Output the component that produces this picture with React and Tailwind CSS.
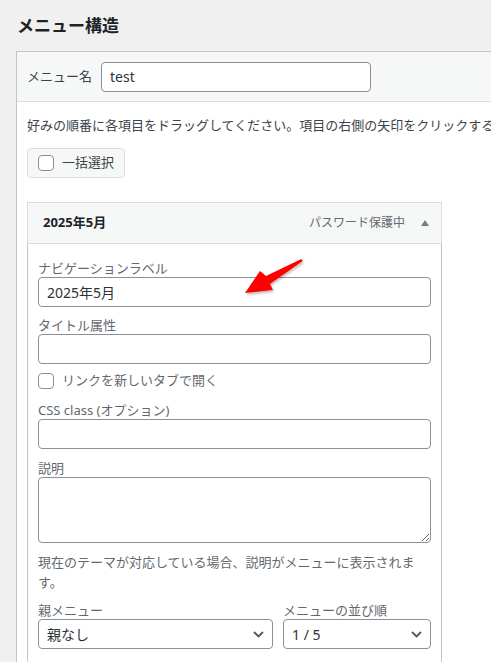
import React from "react";

// --- small form pieces ---
const TextInput = ({ value = "", className = "" }) => (
  <input
    readOnly
    defaultValue={value}
    className={`block h-[30px] rounded-[4px] border border-[#8c8f94] bg-white px-2 text-[14px] text-[#2c3338] outline-none ${className}`}
  />
);

const Check = () => (
  <span className="inline-block h-4 w-4 shrink-0 rounded-[4px] border border-[#8c8f94] bg-white" />
);

const FieldLabel = ({ children }) => (
  <div className="text-[13px] leading-[18px] text-[#646970]">{children}</div>
);

const FakeSelect = ({ value, className = "" }) => (
  <div
    className={`flex h-[30px] items-center justify-between rounded-[4px] border border-[#8c8f94] bg-white pl-2 pr-[8px] text-[14px] text-[#2c3338] ${className}`}
  >
    <span>{value}</span>
    <svg width="11" height="7" viewBox="0 0 11 7" fill="none">
      <path d="M1 1l4.5 4.5L10 1" stroke="#50575e" strokeWidth="1.8" />
    </svg>
  </div>
);

// --- red callout arrow drawn over the form ---
const RedArrow = () => (
  <svg
    className="pointer-events-none absolute left-[240px] top-[255px]"
    width="70"
    height="45"
    viewBox="0 0 70 45"
  >
    <defs>
      <filter id="arrowShadow" x="-20%" y="-20%" width="140%" height="140%">
        <feDropShadow dx="1" dy="2" stdDeviation="1.2" floodColor="#000" floodOpacity="0.25" />
      </filter>
    </defs>
    <polygon
      points="5,38 20,16 26,21 61.3,3.9 62.7,6.1 30,29 33,35"
      fill="#ff0000"
      filter="url(#arrowShadow)"
    />
  </svg>
);

export default function App() {
  return (
    <div className="relative h-[662px] w-full overflow-hidden bg-[#f0f0f1] pl-4 pt-[13px] font-['Noto_Sans','Noto_Sans_CJK_JP',sans-serif]">
      <h2 className="mb-[13px] pl-px text-[17px] font-bold leading-[25px] text-[#1d2327]">
        メニュー構造
      </h2>

      {/* Menu structure panel */}
      <div className="w-[640px] border border-[#c3c4c7] bg-white">
        <div className="flex h-[50px] items-center gap-[9px] border-b border-[#dcdcde] bg-[#f6f7f7] px-[10px]">
          <span className="text-[13px] text-[#3c434a]">メニュー名</span>
          <TextInput value="test" className="w-[270px]" />
        </div>

        <div className="px-[10px] pb-10 pt-[13px]">
          <p className="whitespace-nowrap text-[13px] leading-[20px] text-[#3c434a]">
            好みの順番に各項目をドラッグしてください。項目の右側の矢印をクリックすると、追加の設定オプションが表示されます。
          </p>

          <div className="mt-[13px] flex h-[30px] w-[98px] items-center gap-2 rounded-[4px] border border-[#dcdcde] bg-[#f6f7f7] px-[10px]">
            <Check />
            <span className="text-[13px] text-[#3c434a]">一括選択</span>
          </div>

          {/* Menu item */}
          <div className="mt-6 w-[415px]">
            <div className="flex h-[42px] items-center border border-[#dcdcde] bg-[#f6f7f7] pl-[15px] pr-[12px]">
              <span className="flex-1 text-[13px] font-bold text-[#1d2327]">2025年5月</span>
              <span className="text-[12px] text-[#646970]">パスワード保護中</span>
              <svg className="ml-[16px]" width="8" height="6" viewBox="0 0 8 6">
                <polygon points="0,6 4,0 8,6" fill="#787c82" />
              </svg>
            </div>

            <div className="border-x border-b border-[#c3c4c7] px-[10px] pb-10 pt-[15px]">
              <FieldLabel>ナビゲーションラベル</FieldLabel>
              <TextInput value="2025年5月" className="w-full" />

              <div className="mt-[9px]">
                <FieldLabel>タイトル属性</FieldLabel>
                <TextInput className="w-full" />
              </div>

              <div className="mt-[9px] flex h-4 items-center gap-2">
                <Check />
                <span className="text-[13px] text-[#646970]">リンクを新しいタブで開く</span>
              </div>

              <div className="mt-[12px]">
                <FieldLabel>CSS class (オプション)</FieldLabel>
                <TextInput className="w-full" />
              </div>

              <div className="mt-[10px]">
                <FieldLabel>説明</FieldLabel>
                <textarea
                  readOnly
                  className="block h-[66px] w-full rounded-[4px] border border-[#8c8f94] bg-white outline-none"
                />
              </div>

              <p className="mt-[9px] text-[13px] leading-[20px] text-[#646970]">
                現在のテーマが対応している場合、説明がメニューに表示されま
                <br />
                す。
              </p>

              <div className="mt-[9px] flex gap-[10px]">
                <div className="w-[235px]">
                  <FieldLabel>親メニュー</FieldLabel>
                  <FakeSelect value="親なし" />
                </div>
                <div className="flex-1">
                  <FieldLabel>メニューの並び順</FieldLabel>
                  <FakeSelect value="1 / 5" />
                </div>
              </div>
            </div>
          </div>
        </div>
      </div>

      <RedArrow />
    </div>
  );
}
